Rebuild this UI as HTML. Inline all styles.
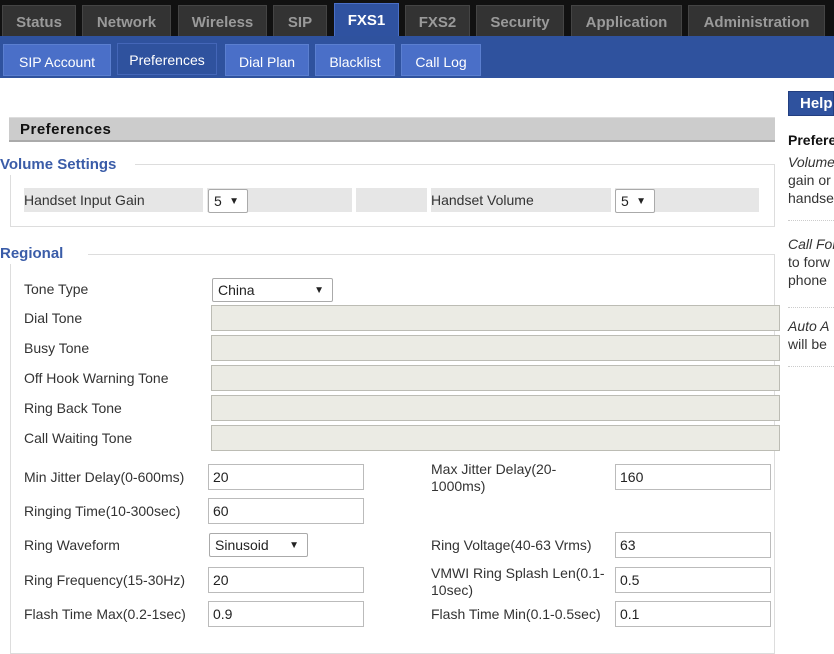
<!DOCTYPE html>
<html><head><style>
*{margin:0;padding:0;box-sizing:border-box}
body{width:834px;height:640px;overflow:hidden;background:#fff;font-family:"Liberation Sans",sans-serif;font-size:14px;color:#333;position:relative}
.a{position:absolute}
.tab{position:absolute;top:5px;height:31px;background:#333;color:#9a9a9a;font-weight:bold;font-size:15px;line-height:33px;text-align:center;border:1px solid #444;border-bottom:none}
.sub{position:absolute;top:44px;height:32px;background:#4a6fc8;color:#fff;font-size:14px;line-height:34px;text-align:center;border:1px solid #5b7fd0}
.lbl{position:absolute;font-size:14px;color:#333;white-space:nowrap}
.inp{position:absolute;height:26px;border:1px solid #bbb;background:#fff;font-size:14px;line-height:25px;padding-left:4px;color:#222}
.dis{position:absolute;left:211px;width:569px;height:26px;background:#ebebe4;border:1px solid #bcbcb4}
.sel{position:absolute;height:24px;border:1px solid #aaa;border-radius:2px;background:#fff;font-size:14px;line-height:23px;padding-left:5px;color:#222}
.sel span{position:absolute;right:8px;font-size:10px}
.help{position:absolute;left:788px;font-size:14px;color:#333;line-height:18px;white-space:nowrap}
.dot{position:absolute;left:788px;width:46px;border-top:1px dotted #ccc}
</style></head><body>
<div class="a" style="left:0;top:0;width:834px;height:36px;background:#111"></div>
<div class="tab" style="left:2px;width:74px">Status</div>
<div class="tab" style="left:82px;width:89px">Network</div>
<div class="tab" style="left:178px;width:89px">Wireless</div>
<div class="tab" style="left:273px;width:54px">SIP</div>
<div class="tab" style="left:334px;width:65px;top:3px;height:33px;background:#2f52a0;color:#fff;border-color:#4a6fc6">FXS1</div>
<div class="tab" style="left:405px;width:65px">FXS2</div>
<div class="tab" style="left:476px;width:88px">Security</div>
<div class="tab" style="left:571px;width:111px">Application</div>
<div class="tab" style="left:688px;width:137px">Administration</div>
<div class="a" style="left:0;top:36px;width:834px;height:42px;background:#2f529e"></div>
<div class="sub" style="left:3px;width:108px">SIP Account</div>
<div class="sub" style="left:117px;width:100px;top:43px;background:#2f529e;border-color:#4466b8;line-height:32px">Preferences</div>
<div class="sub" style="left:225px;width:84px">Dial Plan</div>
<div class="sub" style="left:315px;width:80px">Blacklist</div>
<div class="sub" style="left:401px;width:80px">Call Log</div>

<div class="a" style="left:9px;top:117px;width:766px;height:25px;background:#ccc;border-top:1px solid #ddd;border-bottom:2px solid #aaa;font-weight:bold;font-size:15px;line-height:23px;padding-left:11px;color:#111;letter-spacing:0.5px">Preferences</div>
<div class="a" style="left:788px;top:91px;width:46px;height:25px;background:#2f529e;border:1px solid #223e80;color:#fff;font-weight:bold;font-size:15px;line-height:24px;padding-left:11px">Help</div>
<div class="help" style="top:131px;font-weight:bold;color:#111">Preferences</div>
<div class="help" style="top:153px"><i>Volume</i><br>gain or<br>handset</div>
<div class="dot" style="top:220px"></div>
<div class="help" style="top:235px"><i>Call For</i><br>to forw<br>phone</div>
<div class="dot" style="top:307px"></div>
<div class="help" style="top:317px"><i>Auto A</i><br>will be</div>
<div class="dot" style="top:366px"></div>

<!-- Volume fieldset -->
<div class="a" style="left:10px;top:164px;width:765px;height:63px;border:1px solid #ddd;border-top:1px solid #ddd"></div>
<div class="a" style="left:0;top:155px;background:#fff;padding-right:10px;font-weight:bold;font-size:15px;color:#3a5ca8;line-height:20px;width:135px">Volume Settings</div>
<div class="a" style="left:24px;top:188px;width:179px;height:24px;background:#e6e6e6"></div>
<div class="a" style="left:207px;top:188px;width:145px;height:24px;background:#e6e6e6"></div>
<div class="a" style="left:356px;top:188px;width:71px;height:24px;background:#e6e6e6"></div>
<div class="a" style="left:431px;top:188px;width:180px;height:24px;background:#e6e6e6"></div>
<div class="a" style="left:615px;top:188px;width:144px;height:24px;background:#e6e6e6"></div>
<div class="lbl" style="left:24px;top:192px">Handset Input Gain</div>
<div class="sel" style="left:208px;top:189px;width:40px">5<span>▼</span></div>
<div class="lbl" style="left:431px;top:192px">Handset Volume</div>
<div class="sel" style="left:615px;top:189px;width:40px">5<span>▼</span></div>

<!-- Regional -->
<div class="a" style="left:10px;top:254px;width:765px;height:400px;border:1px solid #ddd"></div>
<div class="a" style="left:0;top:244px;background:#fff;padding-right:10px;font-weight:bold;font-size:15px;color:#3a5ca8;line-height:20px;width:88px">Regional</div>
<div class="lbl" style="left:24px;top:281px">Tone Type</div>
<div class="sel" style="left:212px;top:278px;width:121px">China<span>▼</span></div>
<div class="lbl" style="left:24px;top:310px">Dial Tone</div>
<div class="dis" style="top:305px"></div>
<div class="lbl" style="left:24px;top:340px">Busy Tone</div>
<div class="dis" style="top:335px"></div>
<div class="lbl" style="left:24px;top:370px">Off Hook Warning Tone</div>
<div class="dis" style="top:365px"></div>
<div class="lbl" style="left:24px;top:400px">Ring Back Tone</div>
<div class="dis" style="top:395px"></div>
<div class="lbl" style="left:24px;top:430px">Call Waiting Tone</div>
<div class="dis" style="top:425px"></div>

<div class="lbl" style="left:24px;top:469px">Min Jitter Delay(0-600ms)</div>
<div class="inp" style="left:208px;top:464px;width:156px">20</div>
<div class="lbl" style="left:431px;top:461px;line-height:17px">Max Jitter Delay(20-<br>1000ms)</div>
<div class="inp" style="left:615px;top:464px;width:156px">160</div>
<div class="lbl" style="left:24px;top:503px">Ringing Time(10-300sec)</div>
<div class="inp" style="left:208px;top:498px;width:156px">60</div>
<div class="lbl" style="left:24px;top:537px">Ring Waveform</div>
<div class="sel" style="left:209px;top:533px;width:99px">Sinusoid<span>▼</span></div>
<div class="lbl" style="left:431px;top:537px">Ring Voltage(40-63 Vrms)</div>
<div class="inp" style="left:615px;top:532px;width:156px">63</div>
<div class="lbl" style="left:24px;top:572px">Ring Frequency(15-30Hz)</div>
<div class="inp" style="left:208px;top:567px;width:156px">20</div>
<div class="lbl" style="left:431px;top:565px;line-height:17px">VMWI Ring Splash Len(0.1-<br>10sec)</div>
<div class="inp" style="left:615px;top:567px;width:156px">0.5</div>
<div class="lbl" style="left:24px;top:606px">Flash Time Max(0.2-1sec)</div>
<div class="inp" style="left:208px;top:601px;width:156px">0.9</div>
<div class="lbl" style="left:431px;top:606px">Flash Time Min(0.1-0.5sec)</div>
<div class="inp" style="left:615px;top:601px;width:156px">0.1</div>
</body></html>
